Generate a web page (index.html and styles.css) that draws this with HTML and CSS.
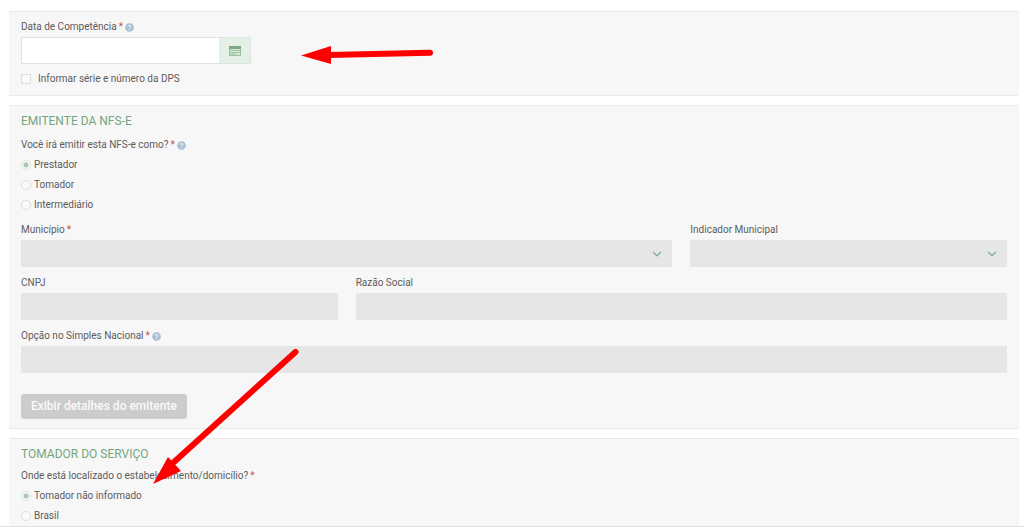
FILE: index.html
```
<!DOCTYPE html>
<html lang="pt-BR">
<head>
<meta charset="utf-8">
<meta name="viewport" content="width=device-width, initial-scale=1">
<title>Emissão de NFS-e</title>
<link rel="stylesheet" href="styles.css">
</head>
<body>
<svg class="defs" width="0" height="0" aria-hidden="true">
  <symbol id="help" viewBox="0 0 10 10">
    <circle cx="5" cy="5" r="4.8" fill="#a9bfd6"/>
    <path d="M3.5 4C3.5 2.3 6.5 2.3 6.5 4C6.5 5 5 4.9 5 5.9M5 6.9V7.8" fill="none" stroke="#fff" stroke-width="1.1"/>
  </symbol>
</svg>
<form class="page">
  <section class="panel">
    <div class="label-row">
      <label for="data">Data de Competência</label><span class="required">*</span>
      <svg class="help"><use href="#help"/></svg>
    </div>
    <div class="date-group">
      <input class="date-input" id="data" type="text">
      <button class="date-button" type="button" aria-label="Abrir calendário">
        <svg class="calendar" viewBox="0 0 12 10">
          <rect x="0.5" y="0.5" width="11" height="9" fill="#d3e5d6" stroke="#9cc0a3"/>
          <path d="M0 0H12V3H0Z" fill="#7aa984"/>
          <path d="M2 4.5H11M1 6.5H11M1 8.2H7" stroke="#8db695" stroke-dasharray="1.4 .7" fill="none"/>
        </svg>
      </button>
    </div>
    <label class="check-row"><input class="check" type="checkbox">Informar série e número da DPS</label>
  </section>

  <section class="panel">
    <h2 class="title">EMITENTE DA NFS-E</h2>
    <div class="label-row" id="papel">
      <span>Você irá emitir esta NFS-e como?</span><span class="required">*</span>
      <svg class="help"><use href="#help"/></svg>
    </div>
    <div class="radios" role="radiogroup" aria-labelledby="papel">
      <label class="radio-row"><input class="radio" type="radio" name="papel" checked>Prestador</label>
      <label class="radio-row"><input class="radio" type="radio" name="papel">Tomador</label>
      <label class="radio-row"><input class="radio" type="radio" name="papel">Intermediário</label>
    </div>
    <div class="fields">
      <div class="field wide">
        <div class="label-row"><label for="municipio">Município</label><span class="required">*</span></div>
        <div class="select-box">
          <select class="control" id="municipio" disabled></select>
          <svg class="chevron" viewBox="0 0 10 6"><path d="M1 1L5 4.800L9 1"/></svg>
        </div>
      </div>
      <div class="field">
        <div class="label-row"><label for="indicador">Indicador Municipal</label></div>
        <div class="select-box">
          <select class="control" id="indicador" disabled></select>
          <svg class="chevron" viewBox="0 0 10 6"><path d="M1 1L5 4.800L9 1"/></svg>
        </div>
      </div>
      <div class="field">
        <div class="label-row"><label for="cnpj">CNPJ</label></div>
        <input class="control" id="cnpj" type="text" disabled>
      </div>
      <div class="field wide">
        <div class="label-row"><label for="razao">Razão Social</label></div>
        <input class="control" id="razao" type="text" disabled>
      </div>
      <div class="field full">
        <div class="label-row">
          <label for="simples">Opção no Simples Nacional</label><span class="required">*</span>
          <svg class="help"><use href="#help"/></svg>
        </div>
        <input class="control" id="simples" type="text" disabled>
      </div>
    </div>
    <button class="details" type="button" disabled>Exibir detalhes do emitente</button>
  </section>

  <section class="panel last">
    <h2 class="title compact">TOMADOR DO SERVIÇO</h2>
    <div class="label-row" id="local">
      <span>Onde está localizado o estabelecimento/domicílio?</span><span class="required">*</span>
    </div>
    <div class="radios" role="radiogroup" aria-labelledby="local">
      <label class="radio-row"><input class="radio" type="radio" name="local" checked>Tomador não informado</label>
      <label class="radio-row"><input class="radio" type="radio" name="local">Brasil</label>
    </div>
  </section>
</form>
<svg class="arrow arrow-date" viewBox="0 0 136 24" aria-hidden="true">
  <path class="shaft" d="M129 8.700L28 11"/>
  <path class="head" d="M0 11.500L30 2V20Z"/>
</svg>
<svg class="arrow arrow-taker" viewBox="0 0 150 140" aria-hidden="true">
  <path class="shaft" d="M145.500 5L24 115"/>
  <path class="head" d="M3 137L18 110L31 124Z"/>
</svg>
</body>
</html>
```
FILE: styles.css
```
* {
  box-sizing: border-box;
}

body {
  position: relative;
  margin: 0;
  background: #fff;
  color: #5c5c5c;
  font: 10px/20px Roboto, "Liberation Sans", sans-serif;
}

.defs {
  position: absolute;
}

.page {
  display: flex;
  flex-direction: column;
  gap: 9px;
  padding: 11px 5px 0 9px;
  border-bottom: 1px solid #dfe1e1;
}

.panel {
  padding: 5px 11px 6px;
  border: 1px solid #f4f4f4;
  border-top-color: #e9e9e9;
  border-bottom-color: #e9e9e9;
  background: #f7f7f7;
}

.panel:nth-of-type(2) {
  padding-bottom: 9px;
}

.panel.last {
  padding-bottom: 0;
  border-bottom: 0;
}

.title {
  margin: 0 0 4px;
  color: #74a67e;
  font-size: 12px;
  font-weight: 400;
}

.title.compact {
  margin-bottom: 2px;
}

.label-row {
  display: flex;
  align-items: center;
  gap: 2px;
}

.required {
  color: #c4544f;
}

.help {
  width: 9px;
  height: 9px;
}

.date-group {
  display: flex;
  width: 230px;
  max-width: 100%;
  height: 27px;
  margin-bottom: 5px;
  border: 1px solid #dde3dd;
}

.date-input {
  flex: 1;
  min-width: 0;
  border: 0;
  background: #fff;
  font: inherit;
}

.date-button {
  display: flex;
  align-items: center;
  justify-content: center;
  width: 31px;
  padding: 0;
  border: 0;
  background: #e4f0e5;
}

.calendar {
  width: 12px;
  height: 10px;
}

.check-row {
  display: flex;
  align-items: center;
  gap: 7px;
}

.check {
  appearance: none;
  width: 10px;
  height: 10px;
  margin: 0;
  border: 1px solid #dedede;
  background: #fafafa;
}

.radio-row {
  display: flex;
  align-items: center;
  gap: 3px;
}

.radio {
  appearance: none;
  width: 10px;
  height: 10px;
  margin: 0;
  border: 1px solid #dedede;
  border-radius: 50%;
  background: #fafafa;
}

.radio:checked {
  background: radial-gradient(circle, #a3c8ab 2px, #fafafa 3px);
}

.fields {
  display: grid;
  grid-template-columns: repeat(3, 1fr);
  gap: 6px 18px;
  margin-top: 5px;
}

.wide {
  grid-column: span 2;
}

.full {
  grid-column: span 3;
}

.select-box {
  position: relative;
}

.control {
  appearance: none;
  display: block;
  width: 100%;
  height: 27px;
  padding: 0 8px;
  border: 0;
  border-radius: 0;
  background: #e6e6e6;
  font: inherit;
  opacity: 1;
}

.chevron {
  position: absolute;
  top: 11px;
  right: 10px;
  width: 10px;
  height: 6px;
  fill: none;
  stroke: #82b08d;
  stroke-width: 1.3;
}

.details {
  display: block;
  margin-top: 21px;
  padding: 0 10px;
  border: 0;
  border-radius: 3px;
  background: #ccc;
  color: #fafafa;
  font: 500 12px/25px Roboto, "Liberation Sans", sans-serif;
}

.arrow {
  position: absolute;
  pointer-events: none;
}

.arrow-date {
  top: 44px;
  left: 301px;
  width: 136px;
  height: 24px;
}

.arrow-taker {
  top: 347px;
  left: 150px;
  width: 150px;
  height: 140px;
}

.shaft {
  fill: none;
  stroke: #f00;
  stroke-width: 6;
  stroke-linecap: round;
}

.head {
  fill: #f00;
}
```
